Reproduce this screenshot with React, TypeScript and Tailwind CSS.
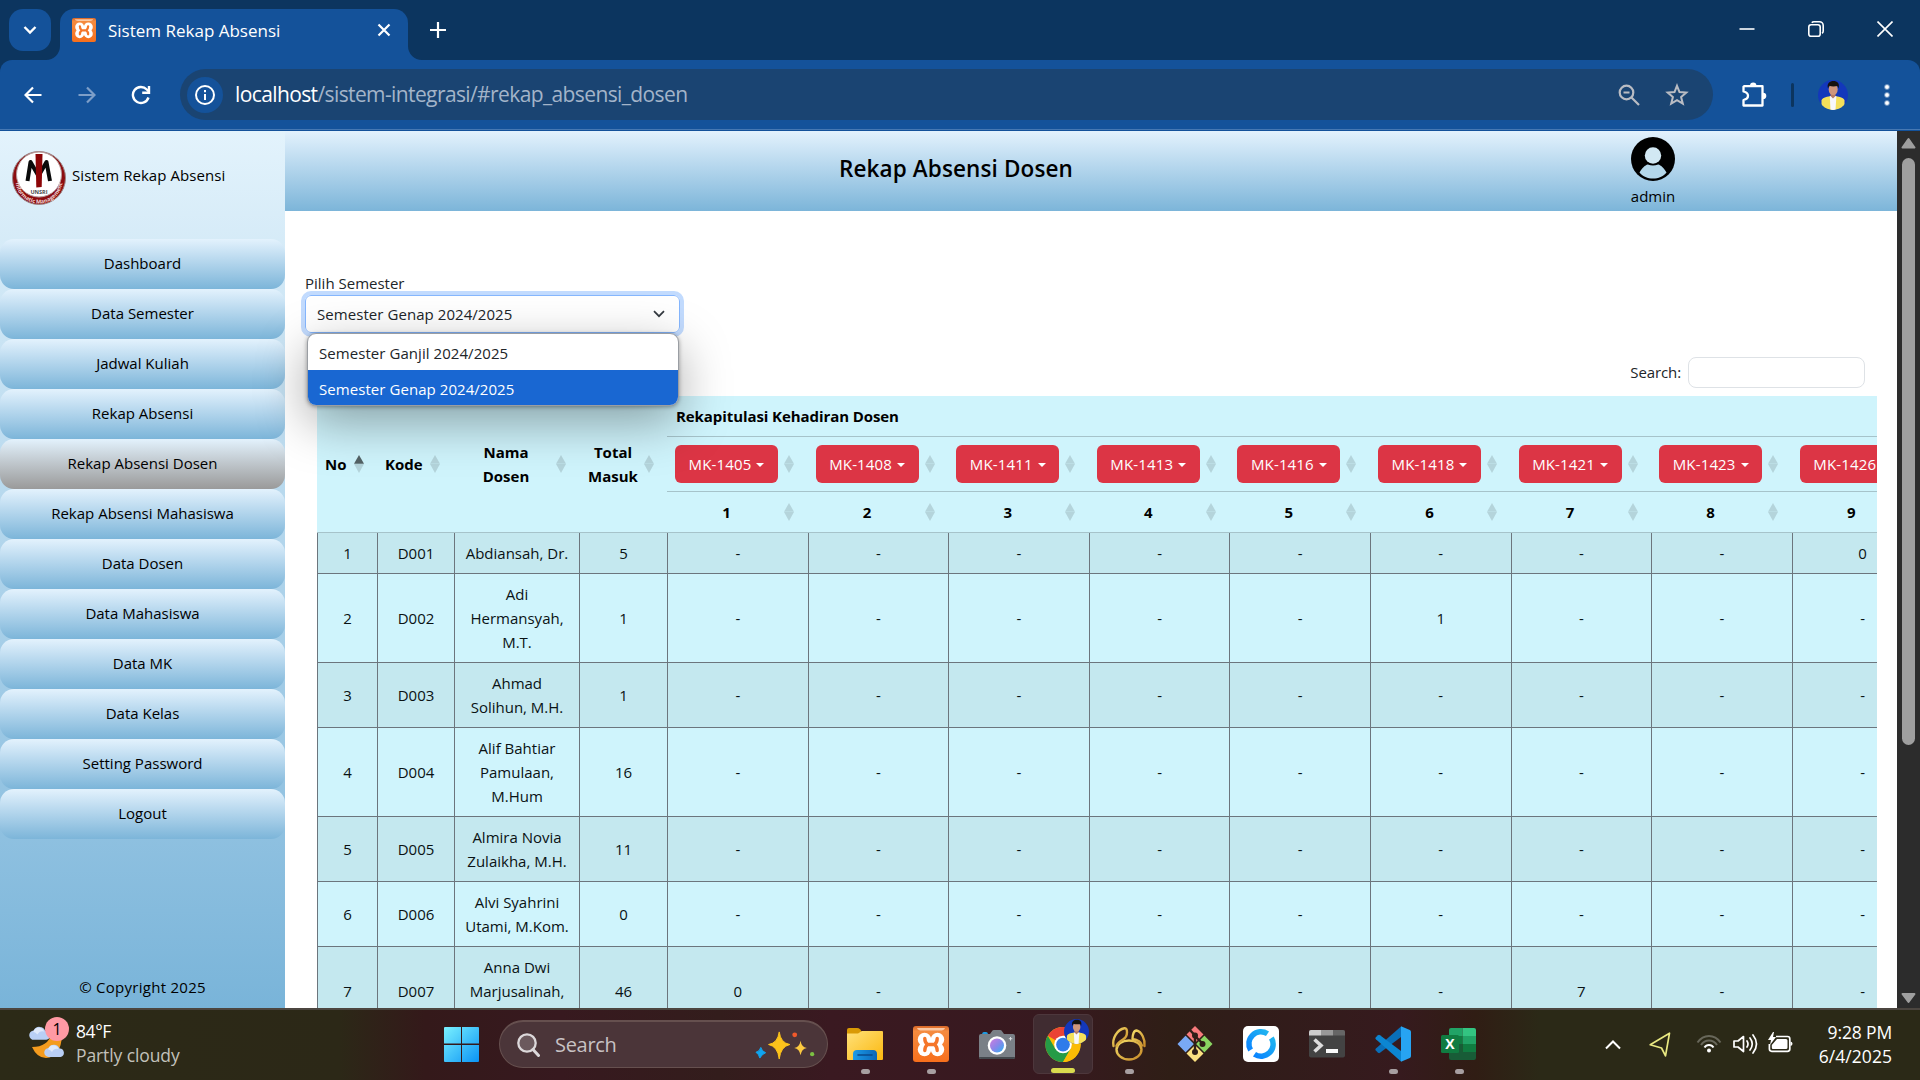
import React from "react";

const menu = [
  "Dashboard",
  "Data Semester",
  "Jadwal Kuliah",
  "Rekap Absensi",
  "Rekap Absensi Dosen",
  "Rekap Absensi Mahasiswa",
  "Data Dosen",
  "Data Mahasiswa",
  "Data MK",
  "Data Kelas",
  "Setting Password",
  "Logout",
];

const courses = ["MK-1405", "MK-1408", "MK-1411", "MK-1413", "MK-1416", "MK-1418", "MK-1421", "MK-1423", "MK-1426"];

type Row = { code: string; name: string[]; total: string; values: string[]; h: string };

const D = "-";
const rows: Row[] = [
  { code: "D001", name: ["Abdiansah, Dr."], total: "5", values: [D, D, D, D, D, D, D, D, "0"], h: "h-[41px]" },
  { code: "D002", name: ["Adi", "Hermansyah,", "M.T."], total: "1", values: [D, D, D, D, D, "1", D, D, D], h: "h-[89px]" },
  { code: "D003", name: ["Ahmad", "Solihun, M.H."], total: "1", values: [D, D, D, D, D, D, D, D, D], h: "h-[65px]" },
  { code: "D004", name: ["Alif Bahtiar", "Pamulaan,", "M.Hum"], total: "16", values: [D, D, D, D, D, D, D, D, D], h: "h-[89px]" },
  { code: "D005", name: ["Almira Novia", "Zulaikha, M.H."], total: "11", values: [D, D, D, D, D, D, D, D, D], h: "h-[65px]" },
  { code: "D006", name: ["Alvi Syahrini", "Utami, M.Kom."], total: "0", values: [D, D, D, D, D, D, D, D, D], h: "h-[65px]" },
  { code: "D007", name: ["Anna Dwi", "Marjusalinah,", "M.Kom."], total: "46", values: ["0", D, D, D, D, D, "7", D, D], h: "h-[89px]" },
];

const Sort = ({ asc = false }: { asc?: boolean }) => (
  <svg width="10" height="18" viewBox="0 0 10 18" className="shrink-0">
    <path d="M5 0 10 8.700H0Z" fill="#000" fillOpacity={asc ? 0.6 : 0.13} />
    <path d="M5 18 0 9.100H10Z" fill="#000" fillOpacity={0.13} />
  </svg>
);

const XamppGlyph = ({ className }: { className: string }) => (
  <svg viewBox="0 0 36 36" className={className}>
    <defs>
      <linearGradient id="xa" x1="0" y1="0" x2="0" y2="1">
        <stop offset="0" stopColor="#d9692a" />
        <stop offset=".15" stopColor="#f58b3f" />
        <stop offset="1" stopColor="#f76f1c" />
      </linearGradient>
    </defs>
    <rect width="36" height="36" rx="3" fill="url(#xa)" />
    <path d="M4 2h28q-1 2.600-5 2.600H9Q5 4.600 4 2Z" fill="#fbc9a4" />
    <g fill="#fff">
      <circle cx="11.500" cy="13.500" r="6.700" />
      <circle cx="24.500" cy="13.500" r="6.700" />
      <circle cx="11.500" cy="23.500" r="6.700" />
      <circle cx="24.500" cy="23.500" r="6.700" />
      <rect x="10" y="13" width="16" height="11" />
    </g>
    <path
      d="M11.800 12.500q0 4 2.700 6-2.700 2-2.700 6M24.200 12.500q0 4-2.700 6 2.700 2 2.700 6M14.500 18.500h7"
      fill="none"
      stroke="#f5762a"
      strokeWidth="3.400"
      strokeLinecap="round"
    />
  </svg>
);

const Person = ({ className }: { className: string }) => (
  <svg viewBox="0 0 30 30" className={className}>
    <defs>
      <clipPath id="pc">
        <circle cx="15" cy="15" r="15" />
      </clipPath>
    </defs>
    <g clipPath="url(#pc)">
      <rect width="30" height="30" fill="#1338bb" />
      <path d="M3.500 30V20.500Q4 18 9 16.800l6-1 6 1q5 1.200 5.500 3.700V30Z" fill="#f4e05a" />
      <path d="M11.800 16h6.600L17.500 30h-5Z" fill="#f7f7fb" />
      <path d="M12.500 12h5v4l-2.500 2.500-2.500-2.500Z" fill="#b77c62" />
      <ellipse cx="15.200" cy="9.500" rx="4.500" ry="5.500" fill="#cf967c" />
      <path d="M10 8.500C8.500 3 12 1 15.500 1s6.500 2 5 7.500l-1-2.500q-5 1-8.300-.3Z" fill="#15110f" />
    </g>
  </svg>
);

const Browser = () => (
  <header className="shrink-0">
    <div className="flex h-[60px] items-start bg-[#0c355f] pl-[9px] text-white">
      <div className="mt-[9px] flex h-[42px] w-[42px] items-center justify-center rounded-[14px] bg-[#14529a]">
        <svg width="14" height="10" viewBox="0 0 14 10" fill="none" stroke="#fff" strokeWidth="2.400">
          <path d="M1.500 2 7 7.500 12.500 2" />
        </svg>
      </div>
      <div className="relative ml-[9px] mt-[9px] flex h-[51px] w-[348px] items-center rounded-t-[14px] bg-[#14529a] pb-[9px] pl-3 pr-[17px]">
        <svg className="absolute -left-[14px] bottom-0" width="14" height="14" viewBox="0 0 14 14">
          <path d="M14 0v14H0A14 14 0 0 0 14 0Z" fill="#14529a" />
        </svg>
        <svg className="absolute -right-[14px] bottom-0" width="14" height="14" viewBox="0 0 14 14">
          <path d="M0 0v14h14A14 14 0 0 1 0 0Z" fill="#14529a" />
        </svg>
        <XamppGlyph className="h-6 w-6" />
        <span className="ml-3 flex-1 pt-[2px] text-[17px]">Sistem Rekap Absensi</span>
        <svg width="14" height="14" viewBox="0 0 14 14" stroke="#fff" strokeWidth="2.200">
          <path d="M1.500 1.500l11 11M12.500 1.500l-11 11" />
        </svg>
      </div>
      <svg className="ml-[22px] mt-[22px]" width="16" height="16" viewBox="0 0 16 16" stroke="#fff" strokeWidth="2.200">
        <path d="M8 0v16M0 8h16" />
      </svg>
      <div className="ml-auto mr-[27px] mt-[21px] flex items-center gap-[53px]">
        <svg width="16" height="16" viewBox="0 0 16 16" stroke="#fff" strokeWidth="1.600">
          <path d="M.5 8h15" />
        </svg>
        <svg width="16" height="16" viewBox="0 0 16 16" fill="none" stroke="#fff" strokeWidth="1.600">
          <rect x=".8" y="3.800" width="11.400" height="11.400" rx="2.300" />
          <path d="M3.800 1.800Q4.500.8 6 .8h5.500a3.700 3.700 0 0 1 3.700 3.700V10q0 1.500-1.200 2.200" />
        </svg>
        <svg width="16" height="16" viewBox="0 0 16 16" stroke="#fff" strokeWidth="1.600">
          <path d="M.5.5l15 15M15.500.5l-15 15" />
        </svg>
      </div>
    </div>
    <div className="bg-[#0c355f]">
      <div className="flex h-[71px] items-start rounded-t-[12px] bg-[#14529a]">
        <div className="flex h-[70px] w-full items-center border-b border-[#4678b3]">
          <svg className="ml-6" width="18" height="18" viewBox="0 0 18 18" fill="none" stroke="#fff" strokeWidth="2.200">
            <path d="M17.500 9H2M9 1.500 1.500 9 9 16.500" />
          </svg>
          <svg className="ml-9" width="18" height="18" viewBox="0 0 18 18" fill="none" stroke="#7d9ec8" strokeWidth="2.200">
            <path d="M.5 9H16M9 1.500 16.500 9 9 16.500" />
          </svg>
          <svg className="ml-[35px]" width="20" height="20" viewBox="0 0 20 20" fill="none" stroke="#fff" strokeWidth="2.400">
            <path d="M17.500 12.500A8 8 0 1 1 15.800 4.500L17.500 6.300" />
            <path d="M18 1v6.800h-6.800" />
          </svg>
          <div className="ml-[29px] flex h-[51px] w-[1533px] items-center rounded-full bg-[#1a4472] pl-[7px] pr-[24px]">
            <div className="flex h-9 w-9 items-center justify-center rounded-full bg-[#14529a]">
              <svg width="20" height="20" viewBox="0 0 20 20" fill="none" stroke="#fff" strokeWidth="2">
                <circle cx="10" cy="10" r="9" />
                <path d="M10 9v6M10 5v2.200" />
              </svg>
            </div>
            <span className="ml-[12px] flex-1 text-[21px] tracking-[-0.61px] text-[#a3b4c9]">
              <span className="text-white">localhost</span>/sistem-integrasi/#rekap_absensi_dosen
            </span>
            <svg width="22" height="22" viewBox="0 0 22 22" fill="none" stroke="#b9bcc3" strokeWidth="2.200">
              <circle cx="8.500" cy="8.500" r="6.800" />
              <path d="M13.500 13.500 21 21M5.500 8.500h6" />
            </svg>
            <svg className="ml-[25px]" width="24" height="24" viewBox="0 0 24 24" fill="none" stroke="#b9bcc3" strokeWidth="2">
              <path d="M12 2.800l2.500 6.300 6.800.5-5.200 4.400 1.700 6.700-5.800-3.600-5.800 3.600 1.700-6.700-5.200-4.400 6.800-.5Z" />
            </svg>
          </div>
          <svg className="ml-[28px]" width="26" height="26" viewBox="0 0 26 26">
            <path
              d="M3 4.200h18.500v19.300H2.500v-5.500q4.500-1 4.500-4.200T2.500 9.500V4.700Z"
              fill="none"
              stroke="#fff"
              strokeWidth="2.300"
              strokeLinejoin="round"
            />
            <path d="M9 3.500a3.200 3 0 0 1 6.400 0ZM22 10.800a3.200 3 0 0 1 0 6.200Z" fill="#fff" />
          </svg>
          <div className="ml-6 h-6 w-[3px] rounded bg-[#0c355f]" />
          <Person className="ml-6 h-[30px] w-[30px]" />
          <div className="ml-[37px] flex flex-col gap-1">
            <div className="h-1 w-1 rounded-full bg-white outline outline-white/40" />
            <div className="h-1 w-1 rounded-full bg-white outline outline-white/40" />
            <div className="h-1 w-1 rounded-full bg-white outline outline-white/40" />
          </div>
        </div>
      </div>
    </div>
  </header>
);

const Sidebar = () => (
  <aside className="flex w-[285px] shrink-0 flex-col bg-linear-to-b from-[#e3f3fc] to-[#79b4d9] text-black">
    <div className="flex h-[108px] shrink-0 items-start pl-3 pt-[19px]">
      <svg width="54" height="56" viewBox="0 0 54 56">
        <defs>
          <path id="ring" d="M3.500 30A23.500 23.500 0 0 0 50.500 30" />
        </defs>
        <circle cx="27" cy="28" r="26.500" fill="#8c0d10" stroke="#9d8787" />
        <circle cx="27" cy="24.500" r="22.500" fill="#fff" stroke="#b9a0a0" />
        <path d="M15.500 31 18.500 12 26.500 26 34.500 12 38 31" fill="none" stroke="#0a0a0a" strokeWidth="4" strokeLinejoin="round" />
        <path d="M23.500 4h7l-.8 33-5.400.5Z" fill="#8c0507" />
        <text x="27" y="43.500" textAnchor="middle" fontSize="5.500" fontWeight="700" fill="#4a4a4a">UNSRI</text>
        <text fontSize="5.500" fontWeight="700" fill="#f2dcdc">
          <textPath href="#ring" startOffset="50%" textAnchor="middle">Informatic Management</textPath>
        </text>
      </svg>
      <span className="ml-[6px] mt-[14px] tracking-[0.06px]">Sistem Rekap Absensi</span>
    </div>
    <nav>
      {menu.map((m) => (
        <div
          key={m}
          className={
            "flex h-[50px] items-center justify-center rounded-[14px] bg-linear-to-b from-[#e3f2fd] pb-[2px] " +
            (m === "Rekap Absensi Dosen" ? "to-[#9a9a9a]" : "to-[#7cb5d9]")
          }
        >
          {m}
        </div>
      ))}
    </nav>
    <div className="mt-auto pb-[10px] text-center tracking-[0.27px]">© Copyright 2025</div>
  </aside>
);

const head = "flex items-center justify-start border-b border-[#a6c3ca] pl-2";

const Table = () => (
  <div className="ml-8 h-[612px] w-[1560px] overflow-hidden">
    <div className="flex w-[1616px] bg-[#cff4fc] font-bold text-black">
      <div className="grid h-[137px] w-[350px] shrink-0 grid-cols-[60px_77px_125px_88px] border-b border-[#a6c3ca] leading-6">
        <div className="flex items-center pl-2">
          <span className="w-[29px]">No</span>
          <Sort asc />
        </div>
        <div className="flex items-center pl-[8px]">
          <span className="w-[45px]">Kode</span>
          <Sort />
        </div>
        <div className="flex items-center pl-2 text-center">
          <span className="w-[88px]">Nama<br />Dosen</span>
          <span className="ml-[6px]"><Sort /></span>
        </div>
        <div className="flex items-center pl-[7px] text-center">
          <span className="w-[54px]">Total<br />Masuk</span>
          <span className="ml-[4px]"><Sort /></span>
        </div>
      </div>
      <div className="grow">
        <div className="flex h-[41px] items-center border-b border-[#a6c3ca] pl-[9px] tracking-[-0.08px]">Rekapitulasi Kehadiran Dosen</div>
        <div className="flex">
          {courses.map((c) => (
            <div key={c} className={"h-[55px] w-[140.6px] shrink-0 gap-[6px] " + head}>
              <div className="flex h-[38px] w-[103px] items-center justify-center rounded-md bg-[#dc3545] font-normal tracking-[0.15px] text-white">
                {c}
                <span className="ml-[5px] mt-px border-x-[4px] border-t-[4px] border-x-transparent border-t-white" />
              </div>
              <Sort />
            </div>
          ))}
        </div>
        <div className="flex">
          {courses.map((c, i) => (
            <div key={c} className={"h-[41px] w-[140.6px] shrink-0 gap-[6px] " + head}>
              <span className="w-[103px] text-center">{i + 1}</span>
              <Sort />
            </div>
          ))}
        </div>
      </div>
    </div>
    {rows.map((r, i) => (
      <div
        key={r.code}
        className={
          "grid w-[1616px] grid-cols-[60px_77px_125px_88px_repeat(9,140.6px)] text-center leading-6 text-[#0a1214] *:flex *:items-center *:justify-center *:border-b *:border-l *:border-[#6c757d] " +
          (i % 2 ? "bg-[#cff4fc] " : "bg-[#c4e8ef] ") +
          r.h
        }
      >
        <div>{i + 1}</div>
        <div>{r.code}</div>
        <div className="flex-col">
          {r.name.map((n) => (
            <span key={n} className="whitespace-nowrap">{n}</span>
          ))}
        </div>
        <div>{r.total}</div>
        {r.values.map((v, j) => (
          <div key={j}>{v}</div>
        ))}
      </div>
    ))}
  </div>
);

const Main = () => (
  <main className="w-[1612px] shrink-0 bg-white">
    <div className="flex h-20 bg-linear-to-b from-[#e3f2fd] to-[#7cb5d9] text-black">
      <h1 className="flex w-[1342px] items-center justify-center pb-[4px] text-[22.5px] font-semibold tracking-[0.12px]">Rekap Absensi Dosen</h1>
      <div className="flex w-[52px] flex-col items-center pt-[6px]">
        <svg width="44" height="44" viewBox="0 0 44 44">
          <circle cx="22" cy="22" r="22" fill="#000" />
          <circle cx="22" cy="18.500" r="8.200" fill="#d2e8f3" />
          <path d="M8.500 35.500c3-5 5.500-7.200 8.300-8q5.200 2 10.400 0c2.800.8 5.300 3 8.300 8C32 39.800 27.500 41.500 22 41.500S12 39.800 8.500 35.500Z" fill="#b4d7ea" />
        </svg>
        <span className="leading-[30px]">admin</span>
      </div>
    </div>
    <div className="pl-5 pt-[60px] text-[#212529]">
      <div className="h-[24px] leading-6">Pilih Semester</div>
      <div className="relative z-10 flex h-[38px] w-[375px] items-center justify-between rounded-md border border-[#86b7fe] bg-white pl-[11px] pr-[14px] outline-4 outline-[#c2dbfe]">
        <span className="tracking-[0.06px]">Semester Genap 2024/2025</span>
        <svg width="12" height="8" viewBox="0 0 12 8" fill="none" stroke="#343a40" strokeWidth="1.700">
          <path d="M1 1.200 6 6.200 11 1.200" />
        </svg>
        <div className="absolute left-px top-[37px] w-[372px] overflow-hidden rounded-[9px] border border-[#9a9ea3] bg-white shadow-[0_16px_50px_rgba(0,0,0,0.35),0_1px_4px_rgba(0,0,0,0.35)]">
          <div className="flex h-9 items-center pl-[11px] pt-[2px] tracking-[0.06px]">Semester Ganjil 2024/2025</div>
          <div className="flex h-[35px] items-center bg-[#1967d2] pl-[11px] pt-[3px] tracking-[0.06px] text-white">Semester Genap 2024/2025</div>
        </div>
      </div>
    </div>
    <div className="flex h-[63px] items-end justify-end pb-2 pr-8 text-[#212529]">
      <span className="pb-[5px] tracking-[-0.1px]">Search:</span>
      <div className="ml-[7px] h-[31px] w-[177px] rounded-lg border border-[#dee2e6] bg-white" />
    </div>
    <Table />
  </main>
);

const Scrollbar = () => (
  <div className="flex w-[23px] shrink-0 flex-col items-center bg-[#2c2c2c] pt-[6px]">
    <svg width="15" height="12" viewBox="0 0 15 12">
      <path d="M7.500 2 13.500 10.500h-12Z" fill="#9f9f9f" stroke="#9f9f9f" strokeWidth="2" strokeLinejoin="round" />
    </svg>
    <div className="mt-[9px] h-[587px] w-[13px] rounded-full bg-[#9f9f9f]" />
    <svg className="mb-[3px] mt-auto" width="15" height="13" viewBox="0 0 15 13">
      <path d="M7.500 10 13.500 2h-12Z" fill="#9f9f9f" stroke="#9f9f9f" strokeWidth="2" strokeLinejoin="round" />
    </svg>
  </div>
);

const Explorer = () => (
  <svg width="36" height="36" viewBox="0 0 36 36">
    <defs>
      <linearGradient id="fo" x1="0" y1="0" x2="1" y2="1">
        <stop offset="0" stopColor="#ffe17a" />
        <stop offset="1" stopColor="#fbb80f" />
      </linearGradient>
      <linearGradient id="fb" x1="0" y1="0" x2="1" y2="0">
        <stop offset="0" stopColor="#1a9be8" />
        <stop offset="1" stopColor="#0c66b8" />
      </linearGradient>
    </defs>
    <path d="M0 10V4q0-2 2-2h8q2 0 3 1.200L15 6l-4 4Z" fill="#d99a05" />
    <path d="M0 7.500h11L15 5h20q1 0 1 1v27q0 1-1 1H1q-1 0-1-1Z" fill="url(#fo)" />
    <path d="M6 34V28q0-4 4-4h16q4 0 4 4v6Z" fill="url(#fb)" />
    <path d="M11 29h14" stroke="#0a4a8c" strokeWidth="1.600" strokeLinecap="round" />
  </svg>
);

const Camera = () => (
  <svg width="36" height="36" viewBox="0 0 36 36">
    <defs>
      <linearGradient id="cl" x1="0" y1="0" x2="1" y2="1">
        <stop offset=".1" stopColor="#c17fe0" />
        <stop offset=".5" stopColor="#8a86ea" />
        <stop offset="1" stopColor="#2bb4f2" />
      </linearGradient>
    </defs>
    <path d="M3 9q0-3 2-3h2q2 0 2 3Z" fill="#1e9ae0" />
    <path d="M0 10q0-2 2-2h9l2.500-3.500q.5-.5 1.200-.5h6.600q.7 0 1.200.5L25 8h9q2 0 2 2v21q0 2-2 2H2q-2 0-2-2Z" fill="#7a8087" />
    <path d="M0 31h36q0 2-2 2H2q-2 0-2-2Z" fill="#43484d" />
    <circle cx="18" cy="19.500" r="9.300" fill="#fff" />
    <circle cx="18" cy="19.500" r="7" fill="url(#cl)" />
    <path d="M31.500 11v3.500M29.800 12.700h3.500" stroke="#d8dbde" />
  </svg>
);

const Chrome = () => (
  <svg width="36" height="36" viewBox="0 0 36 36">
    <circle cx="18" cy="18" r="18" fill="#fbbc05" />
    <path d="M18 18 2.400 9A18 18 0 0 1 33.600 9H18Z" fill="#ea4335" />
    <path d="M2.400 9A18 18 0 0 0 18 36L25.800 22.500 18 18 10.200 22.500Z" fill="#259b46" />
    <path d="M33.600 9A18 18 0 0 1 18 36L25.800 22.500 18 9Z" fill="#fbbc05" />
    <circle cx="18" cy="18" r="9" fill="#fff" />
    <circle cx="18" cy="18" r="7" fill="#2f7bea" />
  </svg>
);

const Navicat = () => (
  <svg width="36" height="36" viewBox="0 0 36 36" fill="none" stroke="url(#nv)" strokeWidth="2.400" strokeLinejoin="round" strokeLinecap="round">
    <defs>
      <linearGradient id="nv" x1="0" y1="0" x2="1" y2="1">
        <stop offset="0" stopColor="#f3dc68" />
        <stop offset="1" stopColor="#c88a28" />
      </linearGradient>
    </defs>
    <path d="M18 14.500c7 0 12.500 4 12.500 9S25.500 33.500 18 33.500s-12.500-5-12.500-10 5.500-9 12.500-9Z" />
    <path d="M2.500 20C1 12.500 6 3.500 13.500 2.200c2-.2 2.500 1.500 2.500 4 0 3-1 5.500-4 7.300-3.500 2-5.500 3.500-6.500 6.500" />
    <path d="M33.500 20C34.500 13.500 30.500 5.500 25.500 4.500c-2.500 0-4 4-4 8.500 5 .8 8.500 3 9.500 6.500" />
  </svg>
);

const Git = () => (
  <svg width="36" height="36" viewBox="0 0 36 36">
    <path d="M18 0 27 9 18 18 9 9Z" fill="#f77a7c" />
    <path d="M9.200 9 18 18 9.200 27 .5 18Z" fill="#79a9f5" />
    <path d="M26.800 9 35.500 18 26.800 27 18 18Z" fill="#8ad562" />
    <path d="M18 18 27 27 18 36 9 27Z" fill="#fce181" />
    <path d="M8 8 28 28M28 8 8 28" stroke="#2f1e18" strokeWidth="1.600" />
    <path d="M12 3 18 9.500V26M18 10l7.500 7.500" fill="none" stroke="#2f1e18" strokeWidth="2.400" />
    <circle cx="18" cy="9.500" r="3" fill="#2f1e18" />
    <circle cx="25.500" cy="18" r="3" fill="#2f1e18" />
    <circle cx="18" cy="26" r="3" fill="#2f1e18" />
  </svg>
);

const Ring = () => (
  <svg width="36" height="36" viewBox="0 0 36 36" fill="none" strokeWidth="5.500">
    <defs>
      <linearGradient id="rg" x1="0" y1="1" x2="1" y2="0">
        <stop offset="0" stopColor="#0a84ff" />
        <stop offset="1" stopColor="#1fb4f0" />
      </linearGradient>
    </defs>
    <rect width="36" height="36" rx="5" fill="#fff" />
    <path d="M7.600 24A12 12 0 0 1 24.500 7.800" stroke="url(#rg)" />
    <path d="M28.400 12A12 12 0 0 1 11.500 28.200" stroke="url(#rg)" />
  </svg>
);

const Terminal = () => (
  <svg width="36" height="36" viewBox="0 0 36 36">
    <rect y="4" width="36" height="27.500" rx="2" fill="#434343" />
    <path d="M0 9.500V6q0-2 2-2h10v5.500Z" fill="#cdcdcd" />
    <path d="M12 4h12v5.500H12Z" fill="#999" />
    <path d="M24 4h10q2 0 2 2v3.500H24Z" fill="#666" />
    <path d="M5.500 13.500 12 19.500 5.500 25.500" fill="none" stroke="#dedede" strokeWidth="3.600" />
    <path d="M17 23h12v4H17Z" fill="#fafafa" />
  </svg>
);

const Code = () => (
  <svg width="36" height="36" viewBox="0 0 36 36">
    <path d="M26 .5 28 9.500 5 26.800Q4 27.500 3 26.700L.8 24.600Q-.1 23.600 .9 22.600Z" fill="#0a6fb9" />
    <path d="M.9 13.200Q-.1 12.200 .8 11.200L3 9.200Q4 8.500 5 9.200L28 26.500 26 35.500Z" fill="#0c86d2" />
    <path d="M26 .3 34.800 4Q36 4.700 36 6v24q0 1.300-1.200 2L26 35.800Z" fill="#27a4f2" />
  </svg>
);

const Excel = () => (
  <svg width="36" height="36" viewBox="0 0 36 36">
    <path d="M8 4q0-2 2-2h11.500v8H8Z" fill="#21a366" />
    <path d="M21.500 2H33q2 0 2 2v6H21.500Z" fill="#33c481" />
    <path d="M8 10h13.500v8H8Z" fill="#107c41" />
    <path d="M21.500 10H35v8H21.500Z" fill="#21a366" />
    <path d="M8 18h13.500v8H8Z" fill="#185c37" />
    <path d="M21.500 18H35v8H21.500Z" fill="#107c41" />
    <path d="M8 26h27v6q0 2-2 2H10q-2 0-2-2Z" fill="#185c37" />
    <rect y="9" width="18" height="18" rx="1.500" fill="#107c41" />
    <text x="9" y="23" textAnchor="middle" fontSize="14" fontWeight="700" fill="#fff">X</text>
  </svg>
);

const apps: { icon: React.ReactNode; open?: boolean; active?: boolean }[] = [
  { icon: <Explorer />, open: true },
  { icon: <XamppGlyph className="h-9 w-9" />, open: true },
  { icon: <Camera /> },
  { icon: <Chrome />, active: true },
  { icon: <Navicat />, open: true },
  { icon: <Git /> },
  { icon: <Ring /> },
  { icon: <Terminal /> },
  { icon: <Code />, open: true },
  { icon: <Excel />, open: true },
];

const Cloud = ({ className }: { className: string }) => (
  <svg viewBox="0 0 21 14" className={className}>
    <path d="M5 14a4.500 4.500 0 0 1-.5-9A6 6 0 0 1 15.500 5.500 4.300 4.300 0 0 1 16.500 14Z" fill="#b9cff5" />
    <path d="M4 6.500A5.500 5.500 0 0 1 14.500 6Q10 5 8 9 6 6 4 6.500Z" fill="#dfe9fb" />
  </svg>
);

const Taskbar = () => (
  <footer className="flex h-[72px] shrink-0 items-stretch border-t-2 border-[#4c4640] bg-[linear-gradient(90deg,#2c2a17_0,#2c2817_340px,#34191a_425px,#37191f_560px,#331d1c_720px,#3a1921_830px,#37191f_1060px,#2f1e16_1170px,#301d19_1230px,#361a1e_1400px,#301d14_1475px,#2b2917_1540px)]">
    <div className="relative flex w-[444px] pl-[28px] pt-[11px]">
      <div className="relative h-[40px] w-[38px]">
        <svg className="absolute left-[3px] top-[12px]" width="32" height="27" viewBox="0 0 32 27">
          <path d="M1 14Q17 14 21 0L31 2Q30 24 15 25 6 25 1 14Z" fill="#f49b1e" />
        </svg>
        <Cloud className="absolute left-px top-[4px] h-[15px] w-[22px]" />
        <Cloud className="absolute left-[16px] top-[22px] h-[14px] w-[21px]" />
        <div className="absolute -top-[4px] left-[17px] flex h-6 w-6 items-center justify-center rounded-full bg-[#ff99a4] text-[16px] text-black">1</div>
      </div>
      <div className="ml-[10px] text-[17.500px] leading-[24px] text-white">
        <div className="-mt-[2px] tracking-[-0.4px]">84°F</div>
        <div className="tracking-[-0.1px] text-[#c2c1bb]">Partly cloudy</div>
      </div>
    </div>
    <svg className="mt-[17px] shrink-0" width="35" height="35" viewBox="0 0 35 35">
      <defs>
        <linearGradient id="wi" x1="0" y1="0" x2="1" y2="1">
          <stop offset="0" stopColor="#7af1ff" />
          <stop offset="1" stopColor="#0a93f5" />
        </linearGradient>
      </defs>
      <path d="M1 0h16v16.500H0V1Q0 0 1 0ZM18 0h16q1 0 1 1v15.500H18ZM0 18h17v17H1Q0 35 0 34ZM18 18h17v16q0 1-1 1H18Z" fill="url(#wi)" />
    </svg>
    <div className="ml-5 mt-[10px] flex h-12 w-[329px] shrink-0 items-center rounded-full border border-t-2 border-[#66504f] bg-[#4b3539] pl-[17px] pr-[10px]">
      <svg width="23" height="24" viewBox="0 0 23 24" fill="none" stroke="#dcd8da" strokeWidth="2.300">
        <circle cx="10" cy="10" r="8.700" fill="#6b595d" />
        <path d="M16 16.500 21.500 22.500" strokeWidth="3" strokeLinecap="round" />
      </svg>
      <span className="ml-[15px] flex-1 text-[20px] tracking-[-0.3px] text-[#c8c2c4]">Search</span>
      <svg width="62" height="33" viewBox="0 0 64 34">
        <path d="M25 4Q26.500 15.500 36 17 26.500 19 25 32 23.500 19 14 17 23.500 15.500 25 4Z" fill="#fcc21b" stroke="#fcc21b" strokeLinejoin="round" />
        <path d="M47 13Q48 19.500 53.500 20.500 48 21.500 47 28 46 21.500 40.500 20.500 46 19.500 47 13Z" fill="#fcc940" />
        <path d="M6 20Q7 24 11 25.500 7 27 5 31 4 27 1 25 5 24 6 20Z" fill="#10a5f0" stroke="#10a5f0" />
        <circle cx="41" cy="7" r="2.500" fill="#f0592b" />
        <circle cx="59" cy="27" r="2.200" fill="#7cc143" />
      </svg>
    </div>
    <div className="ml-1 flex shrink-0">
      {apps.map((a, i) => (
        <div key={i} className="flex w-[66px] justify-center pt-1">
          <div
            className={
              "relative flex h-[60px] w-[60px] flex-col items-center rounded-md pt-[12px] " +
              (a.active ? "border border-[#4d373c] bg-[#402c31] pt-[11px]" : "")
            }
          >
            {a.icon}
            {a.active && <Person className="absolute right-[3px] top-[4px] h-[25px] w-[25px]" />}
            {a.open && <div className="mt-[7px] h-[5px] w-[9px] rounded-full bg-[#a79fa1]" />}
            {a.active && <div className="mt-[6px] h-[5px] w-6 rounded-full bg-[#d9db4e]" />}
          </div>
        </div>
      ))}
    </div>
    <div className="ml-auto flex items-start pr-7 pt-[22px] text-white">
      <svg className="mt-[8px]" width="16" height="10" viewBox="0 0 16 10" fill="none" stroke="#fff" strokeWidth="2">
        <path d="M1 8.500 8 1.500 15 8.500" />
      </svg>
      <svg className="ml-[28px]" width="22" height="26" viewBox="0 0 22 26" fill="none" stroke="#e9e982" strokeWidth="1.700" strokeLinejoin="round">
        <path d="M20.500 1.200 16.500 23.800 12.500 16 1.200 12.800Z" />
      </svg>
      <svg className="ml-[25px] mt-[2px]" width="26" height="20" viewBox="0 0 26 20" fill="none" stroke="#fff" strokeWidth="2">
        <path d="M1.500 8.500Q6 2 13 2T24.500 8.500" stroke="#68675a" />
        <path d="M5 11Q8 6.500 13 6.500T21 11" stroke="#68675a" />
        <path d="M8.500 13.500Q10 11 13 11T17.500 13.500" />
        <circle cx="13" cy="16.500" r="2" fill="#fff" stroke="none" />
      </svg>
      <svg className="ml-[11px] mt-[1px]" width="25" height="22" viewBox="0 0 25 22" fill="none" stroke="#fff" strokeWidth="1.700" strokeLinejoin="round" strokeLinecap="round">
        <path d="M1 8v6h4l5.500 4.500v-15L5 8Z" />
        <path d="M14 8q2 3 0 6M17 5q4.500 6 0 12M20 2q7 9 0 18" />
      </svg>
      <svg className="ml-[10px]" width="25" height="21" viewBox="0 0 25 21">
        <path d="M8 4.500h11.500q2.300 0 2.300 2.300V17q0 2.300-2.300 2.300H3.700q-2.300 0-2.300-2.300V12" fill="none" stroke="#fff" strokeWidth="1.700" />
        <path d="M9 7h9q1.500 0 1.500 1.500v7q0 1.500-1.500 1.500H5q-1.200 0-1.200-1.500V13ZM22.500 9.500q2 .3 2 2.300t-2 2.300Z" fill="#fff" />
        <path d="M5 0 0 8h3L2 13 8 5H5L6 0Z" fill="#fff" />
      </svg>
      <div className="-mt-[12px] ml-[21px] flex w-[78px] flex-col items-end whitespace-nowrap text-[17.500px] leading-6">
        <div className="tracking-[-0.15px]">9:28 PM</div>
        <div className="tracking-[0.05px]">6/4/2025</div>
      </div>
    </div>
  </footer>
);

export default function App() {
  return (
    <div className="flex h-[1080px] w-[1920px] flex-col overflow-hidden bg-white font-['Open_Sans',sans-serif] text-[15px]">
      <Browser />
      <div className="flex h-[877px] shrink-0 overflow-hidden">
        <Sidebar />
        <Main />
        <Scrollbar />
      </div>
      <Taskbar />
    </div>
  );
}
